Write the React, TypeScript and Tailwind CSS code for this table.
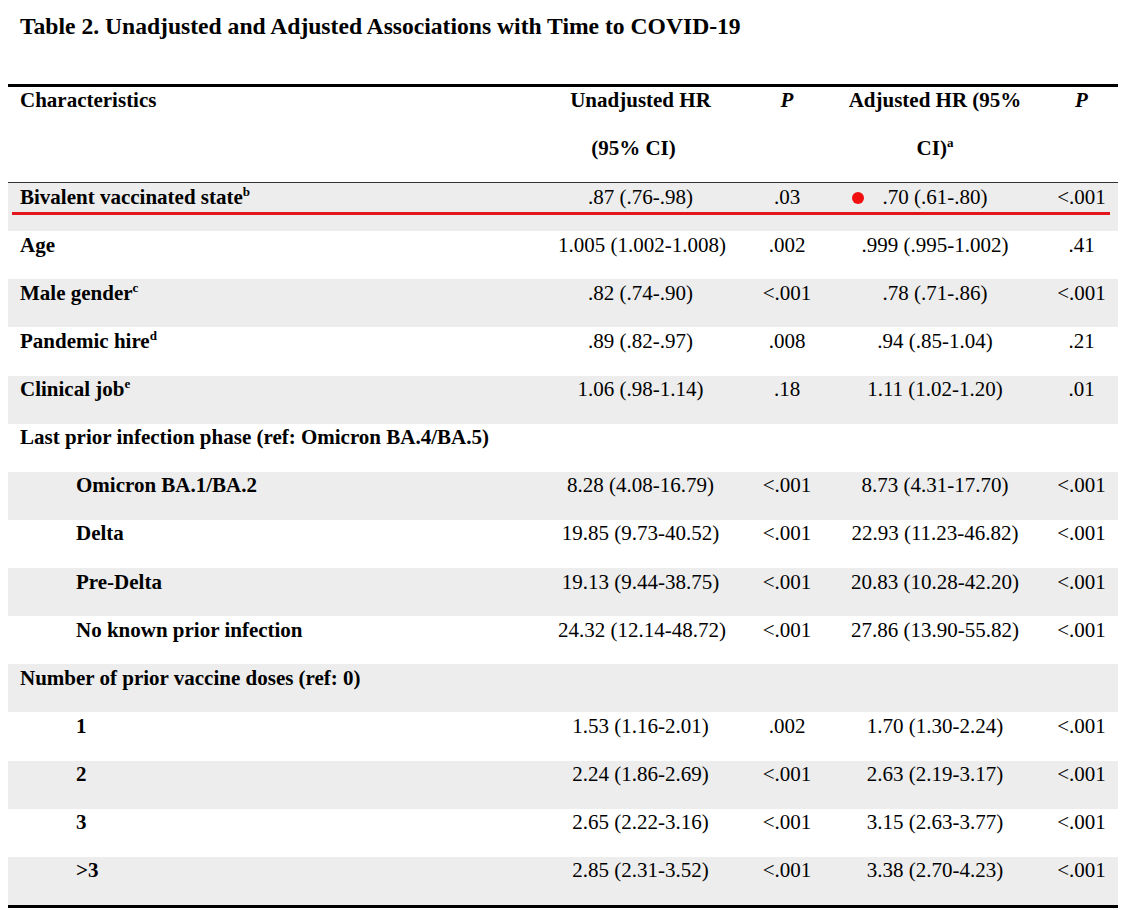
import React from "react";

type Row = {
  label: string;
  sup?: string;
  indent?: boolean;
  section?: boolean;
  v1?: string;
  p1?: string;
  v2?: string;
  p2?: string;
};

const rows: Row[] = [
  { label: "Bivalent vaccinated state", sup: "b", v1: ".87 (.76-.98)", p1: ".03", v2: ".70 (.61-.80)", p2: "<.001" },
  { label: "Age", v1: "1.005 (1.002-1.008)", p1: ".002", v2: ".999 (.995-1.002)", p2: ".41" },
  { label: "Male gender", sup: "c", v1: ".82 (.74-.90)", p1: "<.001", v2: ".78 (.71-.86)", p2: "<.001" },
  { label: "Pandemic hire", sup: "d", v1: ".89 (.82-.97)", p1: ".008", v2: ".94 (.85-1.04)", p2: ".21" },
  { label: "Clinical job", sup: "e", v1: "1.06 (.98-1.14)", p1: ".18", v2: "1.11 (1.02-1.20)", p2: ".01" },
  { label: "Last prior infection phase (ref: Omicron BA.4/BA.5)", section: true },
  { label: "Omicron BA.1/BA.2", indent: true, v1: "8.28 (4.08-16.79)", p1: "<.001", v2: "8.73 (4.31-17.70)", p2: "<.001" },
  { label: "Delta", indent: true, v1: "19.85 (9.73-40.52)", p1: "<.001", v2: "22.93 (11.23-46.82)", p2: "<.001" },
  { label: "Pre-Delta", indent: true, v1: "19.13 (9.44-38.75)", p1: "<.001", v2: "20.83 (10.28-42.20)", p2: "<.001" },
  { label: "No known prior infection", indent: true, v1: "24.32 (12.14-48.72)", p1: "<.001", v2: "27.86 (13.90-55.82)", p2: "<.001" },
  { label: "Number of prior vaccine doses (ref: 0)", section: true },
  { label: "1", indent: true, v1: "1.53 (1.16-2.01)", p1: ".002", v2: "1.70 (1.30-2.24)", p2: "<.001" },
  { label: "2", indent: true, v1: "2.24 (1.86-2.69)", p1: "<.001", v2: "2.63 (2.19-3.17)", p2: "<.001" },
  { label: "3", indent: true, v1: "2.65 (2.22-3.16)", p1: "<.001", v2: "3.15 (2.63-3.77)", p2: "<.001" },
  { label: ">3", indent: true, v1: "2.85 (2.31-3.52)", p1: "<.001", v2: "3.38 (2.70-4.23)", p2: "<.001" },
];

export default function App() {
  return (
    <div className="relative w-[1127px] h-[910px] bg-white text-black font-['Liberation_Serif','Times_New_Roman',serif] overflow-hidden">
      <h1 className="pt-[13px] pl-[20px] text-[23.6px] leading-[26px] font-bold whitespace-nowrap">
        Table 2. Unadjusted and Adjusted Associations with Time to COVID-19
      </h1>

      <div className="relative mx-[8px] mt-[45px] w-[1110px] border-t-[3px] border-black">
        {/* Header */}
        <div className="grid grid-cols-[550px_165px_128px_168px_99px] h-[96px] border-b border-[#333] text-[21px] leading-[24px] font-bold">
          <div className="pl-[12px] pt-[1px]">Characteristics</div>
          <div className="flex flex-col items-center whitespace-nowrap">
            <div className="h-[48px] pt-[1px]">Unadjusted HR</div>
            <div className="h-[48px] pt-[1px] pr-[14px]">(95% CI)</div>
          </div>
          <div className="pt-[1px] text-center italic">P</div>
          <div className="flex flex-col items-center whitespace-nowrap">
            <div className="h-[48px] pt-[1px]">Adjusted HR (95%</div>
            <div className="h-[48px] pt-[1px]">
              CI)<sup className="text-[13px] relative top-[-8px] align-baseline">a</sup>
            </div>
          </div>
          <div className="pt-[1px] pl-[26px] text-center italic">P</div>
        </div>

        {/* Body */}
        {rows.map((r, i) => (
          <div
            key={i}
            className={`grid grid-cols-[550px_165px_128px_168px_99px] h-[48.13px] text-[21px] leading-[24px] ${
              i % 2 === 0 ? "bg-[#ededed]" : "bg-white"
            }`}
          >
            <div
              className={`pt-[1.5px] font-bold whitespace-nowrap ${r.indent ? "pl-[68px]" : "pl-[12px]"} ${
                r.section ? "col-span-5" : ""
              }`}
            >
              {r.label}
              {r.sup && <sup className="text-[13px] relative top-[-8px] align-baseline">{r.sup}</sup>}
            </div>
            {!r.section && (
              <>
                <div className="pt-[1.5px] text-center whitespace-nowrap">{r.v1}</div>
                <div className="pt-[1.5px] text-center whitespace-nowrap">{r.p1}</div>
                <div className="pt-[1.5px] text-center whitespace-nowrap">{r.v2}</div>
                <div className="pt-[1.5px] pl-[26px] text-center whitespace-nowrap">{r.p2}</div>
              </>
            )}
          </div>
        ))}

        <div className="border-t-[3px] border-black" />

        {/* Annotation overlays */}
        <div className="absolute left-[4px] top-[125px] w-[1098px] h-[3px] bg-[#e3161b]" />
        <div className="absolute left-[844px] top-[105px] w-[12px] h-[12px] rounded-full bg-[#f01010]" />
      </div>
    </div>
  );
}
